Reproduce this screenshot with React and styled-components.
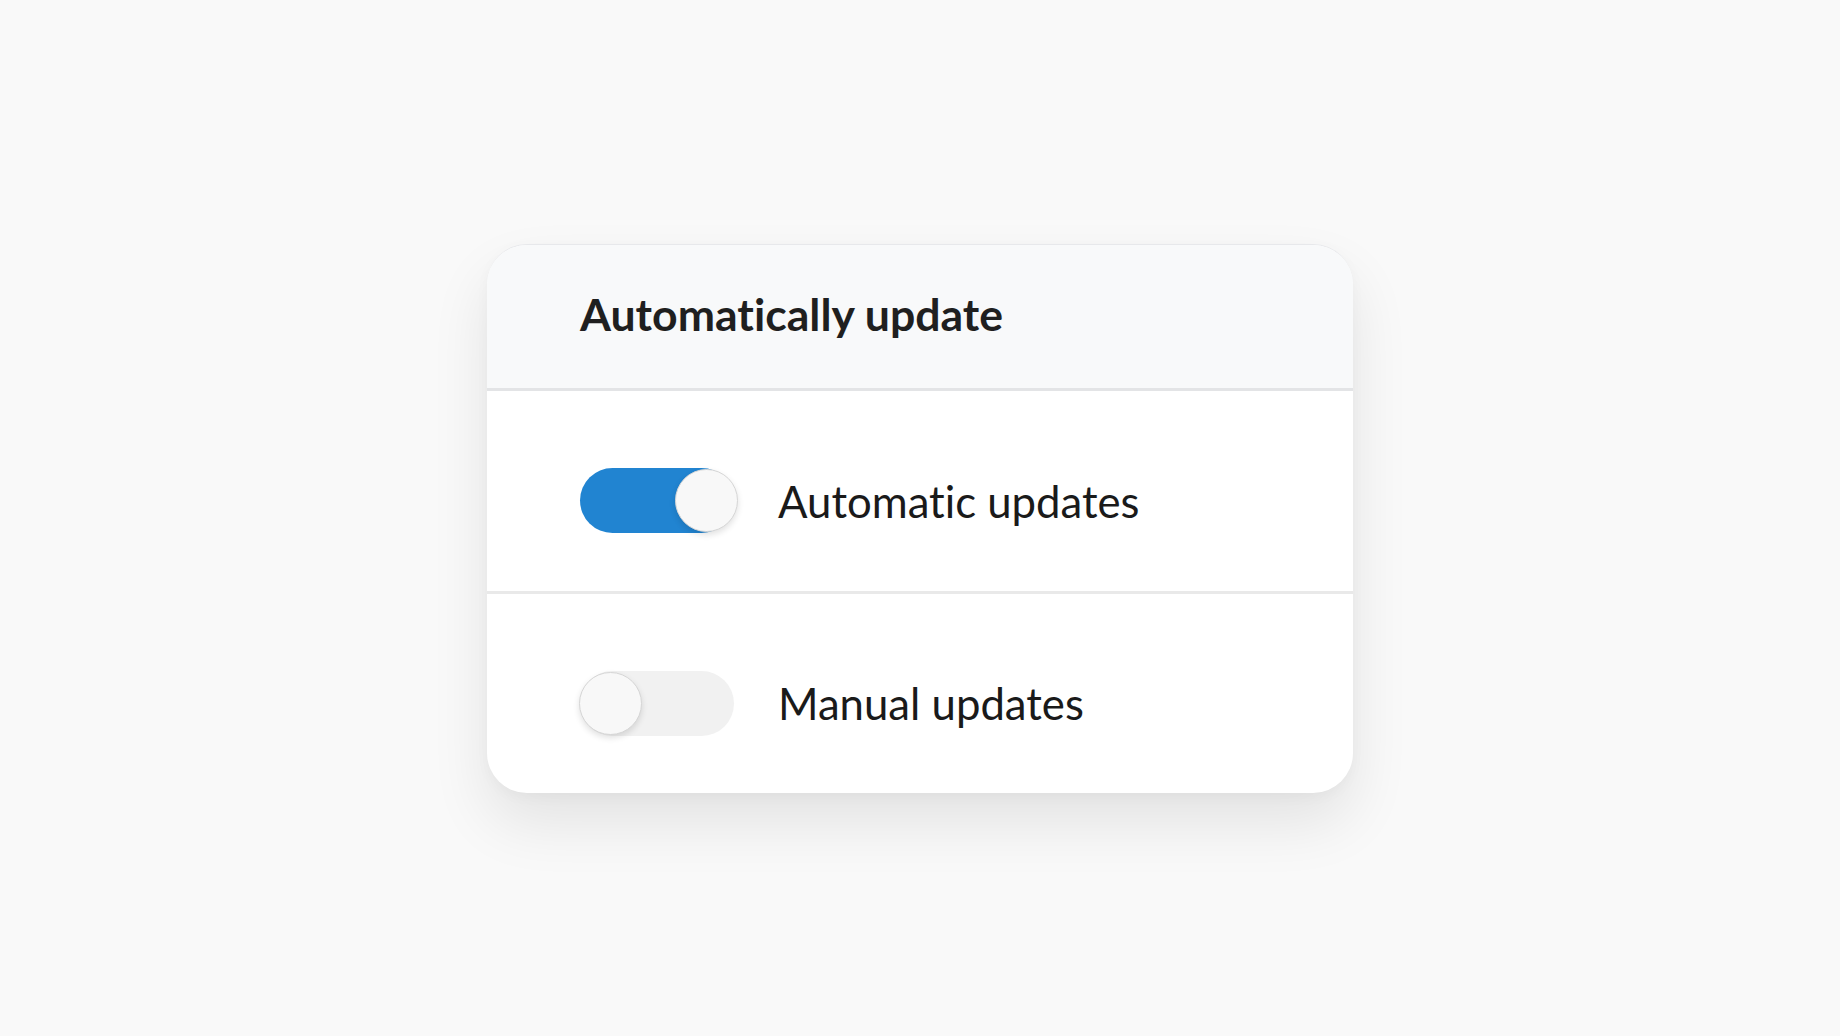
import { useState } from 'react'
import styled, { createGlobalStyle } from 'styled-components'

const GlobalStyle = createGlobalStyle`
  html, body {
    margin: 0;
    padding: 0;
    background: #f9f9f9;
    font-family: Lato, "Open Sans", sans-serif;
    font-variant-ligatures: none;
  }
`

const Page = styled.main`
  min-height: 1036px;
  display: flex;
  align-items: center;
  justify-content: center;
`

const Card = styled.section`
  width: 866px;
  background: #fff;
  border-radius: 40px;
  overflow: hidden;
  box-shadow: 0 30px 60px rgba(0, 0, 0, 0.09), 0 4px 14px rgba(0, 0, 0, 0.03);
  border-top: 1px solid #e7e8eb;
`

const Header = styled.header`
  height: 146px;
  display: flex;
  align-items: center;
  padding: 0 93px 6px;
  box-sizing: border-box;
  background: #f8f9fa;
  border-bottom: 3px solid #e3e4e6;
`

const Title = styled.h1`
  margin: 0;
  font-size: 44.6px;
  font-weight: 700;
  color: #1f1f1f;
`

const Row = styled.label`
  height: 200px;
  display: flex;
  align-items: center;
  gap: 44px;
  padding: 20px 93px 0;
  box-sizing: border-box;
  cursor: pointer;
  & + & {
    border-top: 3px solid #e9e9e9;
    height: 202px;
  }
`

const Track = styled.span`
  position: relative;
  flex: none;
  width: 154px;
  height: 65px;
  border-radius: 33px;
  background: ${p => (p.$on ? '#2184d1' : '#f1f1f1')};
`

const Knob = styled.span`
  position: absolute;
  top: 1px;
  ${p => (p.$on ? 'right: -4px;' : 'left: -1px;')}
  width: 61px;
  height: 61px;
  border-radius: 50%;
  background: #f8f8f8;
  border: 1px solid #d6d6d6;
  box-shadow: 0 3px 6px rgba(0, 0, 0, 0.12);
`

const Label = styled.span`
  font-size: 43.7px;
  color: #1a1a1a;
`

const Toggle = ({ on }) => (
  <Track $on={on}>
    <Knob $on={on} />
  </Track>
)

export default function App () {
  const [auto, setAuto] = useState(true)

  return (
    <>
      <GlobalStyle />
      <Page>
        <Card>
          <Header>
            <Title>Automatically update</Title>
          </Header>
          <Row onClick={() => setAuto(true)}>
            <Toggle on={auto} />
            <Label>Automatic updates</Label>
          </Row>
          <Row onClick={() => setAuto(false)}>
            <Toggle on={!auto} />
            <Label>Manual updates</Label>
          </Row>
        </Card>
      </Page>
    </>
  )
}
